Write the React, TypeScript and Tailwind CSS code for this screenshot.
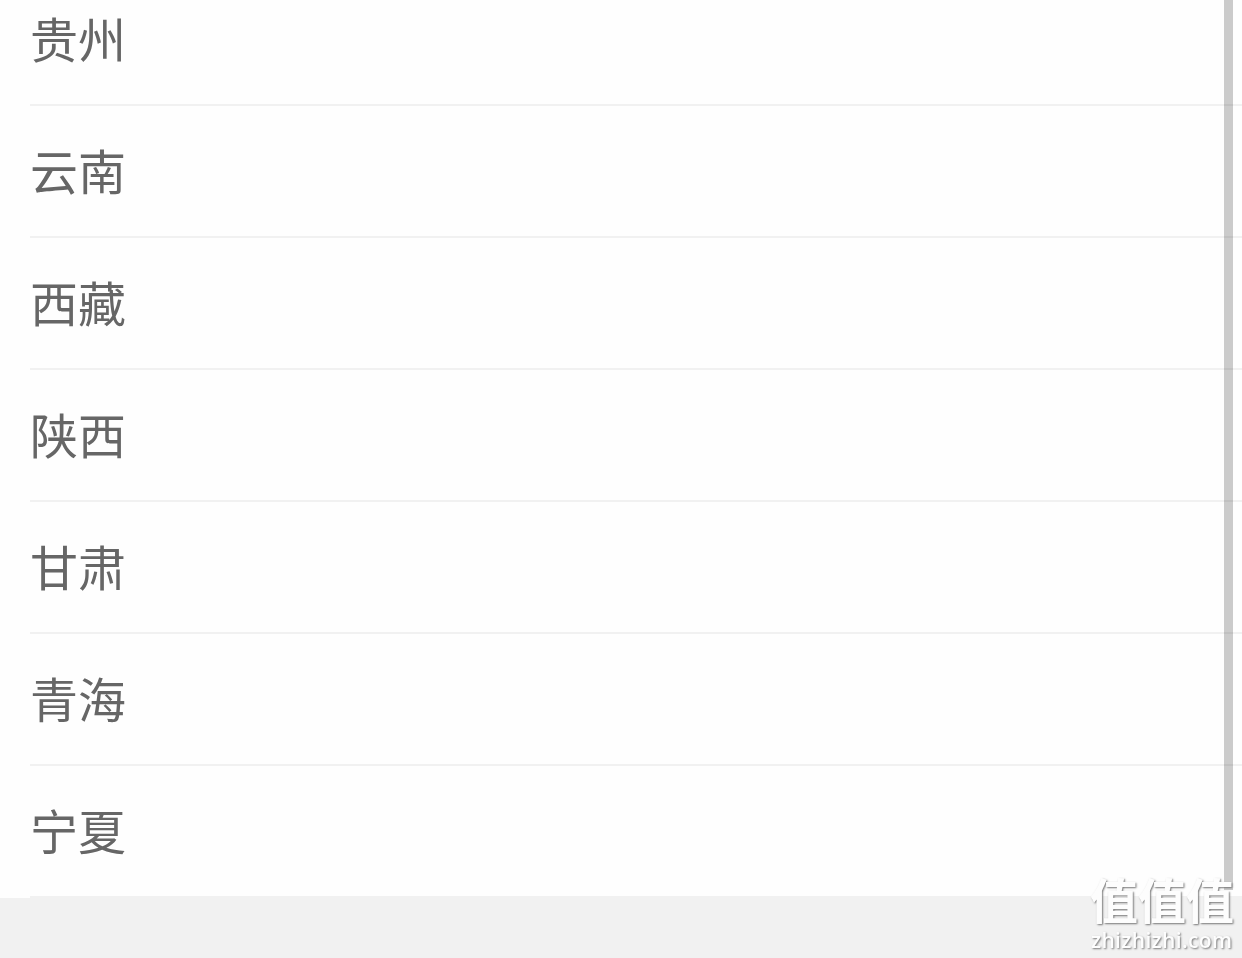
import React from 'react';

const provinces = ['贵州', '云南', '西藏', '陕西', '甘肃', '青海', '宁夏'];

const Watermark = () => (
  <div className="absolute left-[1091px] top-[874px] text-[#fdfdfd] will-change-transform">
    <div className="-ml-px font-['Noto_Sans_CJK_SC',sans-serif] text-[48px] font-bold leading-[48px] whitespace-nowrap [text-shadow:1px_1px_2px_#777]">值值值</div>
    <div className="mt-[6px] font-['Open_Sans',sans-serif] text-[21px] font-semibold leading-[24px] tracking-[0.35px] whitespace-nowrap [text-shadow:1px_1px_2px_#777]">zhizhizhi.com</div>
  </div>
);

const App = () => {
  return (
    <div className="relative h-[958px] overflow-hidden bg-[#f1f1f1] font-['Noto_Sans_CJK_SC',sans-serif]">
      <ul className="-mt-[26px] bg-[#fefefe] pl-[30px]">
        {provinces.map((name) => (
          <li
            key={name}
            className="flex h-[132px] items-center border-b-2 border-[#f1f1f1] pb-[4px] text-[48px] leading-none text-[#666]"
          >
            <span className="will-change-transform">{name}</span>
          </li>
        ))}
      </ul>
      {/* Scrollbar */}
      <div className="absolute left-[1224px] top-0 h-[890px] w-[9px] bg-black/20" />
      <Watermark />
    </div>
  );
};

export default App;
